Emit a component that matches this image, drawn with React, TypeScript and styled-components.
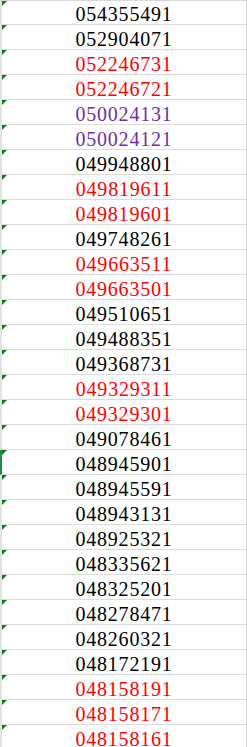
import React from 'react';
import styled, { createGlobalStyle } from 'styled-components';

const Global = createGlobalStyle`
	html, body {
		margin: 0;
		padding: 0;
		background: #ffffff;
		overflow: hidden;
	}
`;

type Tone = 'black' | 'red' | 'purple';

const colors: Record<Tone, string> = {
	black: '#000000',
	red: '#ff0000',
	purple: '#7030a0',
};

const rows: { value: string; tone: Tone }[] = [
	{ value: '054355491', tone: 'black' },
	{ value: '052904071', tone: 'black' },
	{ value: '052246731', tone: 'red' },
	{ value: '052246721', tone: 'red' },
	{ value: '050024131', tone: 'purple' },
	{ value: '050024121', tone: 'purple' },
	{ value: '049948801', tone: 'black' },
	{ value: '049819611', tone: 'red' },
	{ value: '049819601', tone: 'red' },
	{ value: '049748261', tone: 'black' },
	{ value: '049663511', tone: 'red' },
	{ value: '049663501', tone: 'red' },
	{ value: '049510651', tone: 'black' },
	{ value: '049488351', tone: 'black' },
	{ value: '049368731', tone: 'black' },
	{ value: '049329311', tone: 'red' },
	{ value: '049329301', tone: 'red' },
	{ value: '049078461', tone: 'black' },
	{ value: '048945901', tone: 'black' },
	{ value: '048945591', tone: 'black' },
	{ value: '048943131', tone: 'black' },
	{ value: '048925321', tone: 'black' },
	{ value: '048335621', tone: 'black' },
	{ value: '048325201', tone: 'black' },
	{ value: '048278471', tone: 'black' },
	{ value: '048260321', tone: 'black' },
	{ value: '048172191', tone: 'black' },
	{ value: '048158191', tone: 'red' },
	{ value: '048158171', tone: 'red' },
	{ value: '048158161', tone: 'red' },
];

const S = {
	Sheet: styled.div`
		width: 246px;
		border-top: 1px solid #d9d9d9;
		border-right: 1px solid #d9d9d9;
		display: flex;
		flex-direction: column;
	`,

	Cell: styled.div<{ $tone: Tone; $active: boolean }>`
		position: relative;
		flex: none;
		height: 25px;
		box-sizing: border-box;
		padding-top: 4px;
		border-bottom: 1px solid #dcdcdc;
		border-left: 2px solid ${(p) => (p.$active ? '#1e8a4c' : '#e2e2e2')};
		font-family: 'Liberation Serif', 'Times New Roman', serif;
		font-size: 20px;
		letter-spacing: 0.8px;
		line-height: 21px;
		text-align: center;
		color: ${(p) => colors[p.$tone]};

		&:first-child {
			height: 24px;
			padding-top: 3px;
		}
	`,

	Marker: styled.span`
		position: absolute;
		left: 0;
		top: 0;
		width: 0;
		height: 0;
		border-top: 5px solid #0b7a1f;
		border-right: 5px solid transparent;
	`,
};

function App() {
	return (
		<>
			<Global />
			<S.Sheet>
				{rows.map((r, i) => (
					<S.Cell key={i} $tone={r.tone} $active={i === 18}>
						<S.Marker />
						{r.value}
					</S.Cell>
				))}
			</S.Sheet>
		</>
	);
}

export default App;
